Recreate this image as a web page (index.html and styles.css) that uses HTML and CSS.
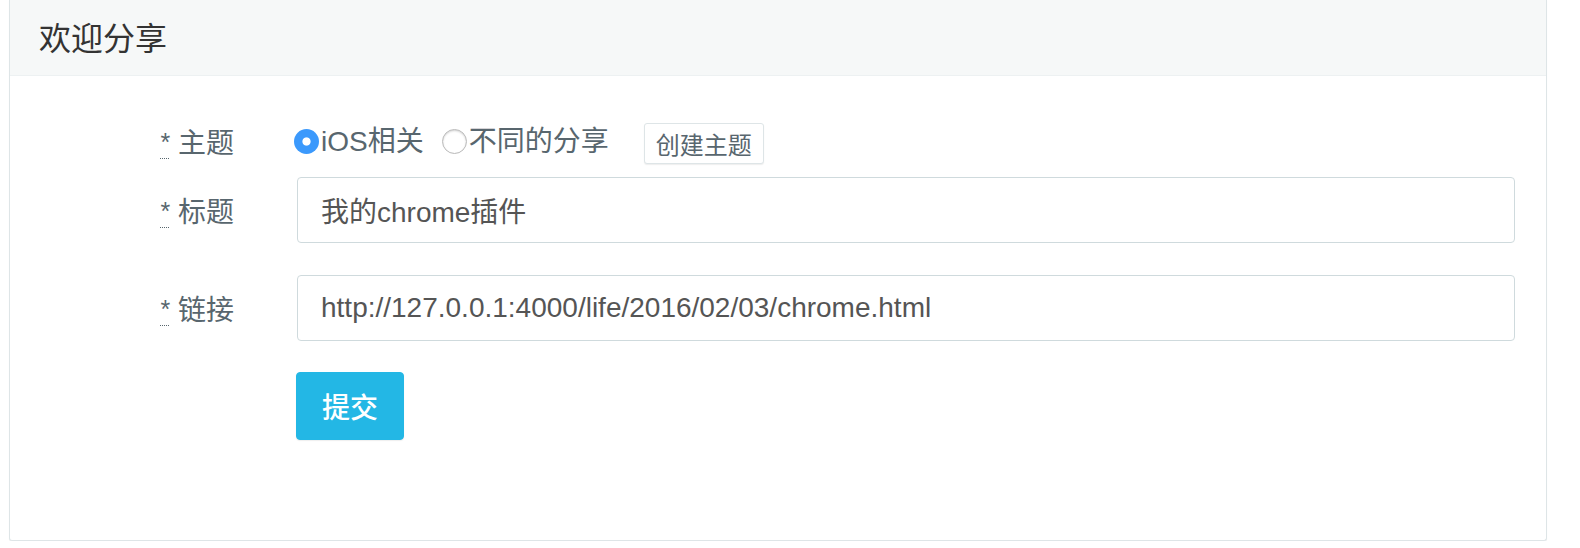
FILE: index.html
```html
<!DOCTYPE html>
<html lang="zh-CN">
<head>
<meta charset="utf-8">
<title>欢迎分享</title>
<link rel="stylesheet" href="styles.css">
</head>
<body>
<div class="panel">
  <div class="panel-heading">欢迎分享</div>
  <form class="panel-body">
    <div class="form-row form-row-topic">
      <label class="form-label"><abbr title="必填">*</abbr> 主题</label>
      <div class="control control-topic">
        <label class="radio"><input type="radio" name="topic" checked><span>iOS相关</span></label>
        <label class="radio"><input type="radio" name="topic"><span>不同的分享</span></label>
        <button type="button" class="btn-default">创建主题</button>
      </div>
    </div>
    <div class="form-row form-row-title">
      <label class="form-label"><abbr title="必填">*</abbr> 标题</label>
      <div class="control">
        <input class="text-input" type="text" value="我的chrome插件">
      </div>
    </div>
    <div class="form-row form-row-link">
      <label class="form-label"><abbr title="必填">*</abbr> 链接</label>
      <div class="control">
        <input class="text-input" type="text" value="http://127.0.0.1:4000/life/2016/02/03/chrome.html">
      </div>
    </div>
    <div class="form-row form-row-submit">
      <div class="form-label"></div>
      <div class="control">
        <button type="submit" class="btn-info">提交</button>
      </div>
    </div>
  </form>
</div>
</body>
</html>
```
FILE: styles.css
```css
html, body {
  margin: 0;
  padding: 0;
  background: #fff;
}

body {
  font-family: "Liberation Sans", "Noto Sans CJK SC", sans-serif;
  color: #58666e;
}

.panel {
  margin: 0 33px 0 9px;
  background: #fff;
  border: 1px solid #dee5e7;
  border-top-width: 0;
  border-radius: 0 0 3px 3px;
  box-shadow: 0 1px 1px rgba(0, 0, 0, 0.05);
}

.panel-heading {
  background: #f6f8f8;
  border-bottom: 1px solid #edf1f2;
  padding: 12px 0 15px 29px;
  font-family: "Noto Sans CJK SC", sans-serif;
  font-size: 32px;
  line-height: 48px;
  color: #333;
}

.panel-body {
  margin: 0;
  padding: 42px 31px 100px 0;
}

.form-row {
  display: flex;
  align-items: center;
}

.form-row-title {
  margin-top: 13px;
}

.form-row-link {
  margin-top: 32px;
}

.form-row-submit {
  margin-top: 31px;
}

.form-label {
  width: 224px;
  flex: none;
  margin-right: 63px;
  padding-top: 3px;
  text-align: right;
  font-size: 28px;
  line-height: 40px;
  color: #58666e;
}

.form-label abbr {
  font-size: 25px;
  vertical-align: 2px;
  text-decoration: underline dotted;
  text-underline-offset: 7px;
  text-decoration-thickness: 1px;
}

.control {
  flex: 1;
  min-width: 0;
}

.control-topic {
  display: flex;
  align-items: center;
  height: 46px;
}

.radio {
  display: flex;
  align-items: center;
  font-size: 28px;
  line-height: 40px;
  color: #58666e;
}

.radio span {
  padding-top: 2px;
}

.radio + .radio {
  margin-left: 18px;
}

.radio:first-child {
  margin-left: -3px;
}

.radio input {
  appearance: none;
  -webkit-appearance: none;
  width: 25px;
  height: 25px;
  margin: 0 2px 0 0;
  border-radius: 50%;
  border: 1px solid #b9b9b9;
  background: #fff;
  box-shadow: inset 0 1px 2px rgba(0, 0, 0, 0.18);
  box-sizing: border-box;
}

.radio input:checked {
  border: none;
  background: radial-gradient(circle, #fff 0 3.6px, #3b99fc 4.6px);
  box-shadow: none;
}

.btn-default {
  align-self: flex-end;
  margin-left: 35px;
  height: 41px;
  padding: 0 11px;
  border: 1px solid #dee5e7;
  border-radius: 3px;
  background: #fff;
  box-shadow: 0 1px 1px rgba(90, 90, 90, 0.1);
  font-family: "Noto Sans CJK SC", sans-serif;
  font-size: 24px;
  line-height: 1;
  color: #58666e;
}

.text-input {
  display: block;
  width: 100%;
  height: 66px;
  box-sizing: border-box;
  margin: 0;
  padding: 0 23px;
  border: 1px solid #cfdadd;
  border-radius: 4px;
  background: #fff;
  font-family: "Liberation Sans", "Noto Sans CJK SC", sans-serif;
  font-size: 28px;
  color: #555;
  outline: none;
}

.btn-info {
  display: block;
  margin-left: -1px;
  width: 108px;
  height: 68px;
  border: 1px solid #23b7e5;
  border-radius: 4px;
  background: #23b7e5;
  box-shadow: 0 1px 1px rgba(90, 90, 90, 0.1);
  font-family: "Noto Sans CJK SC", sans-serif;
  font-size: 28px;
  font-weight: 500;
  color: #fff;
  padding: 0;
}
```
